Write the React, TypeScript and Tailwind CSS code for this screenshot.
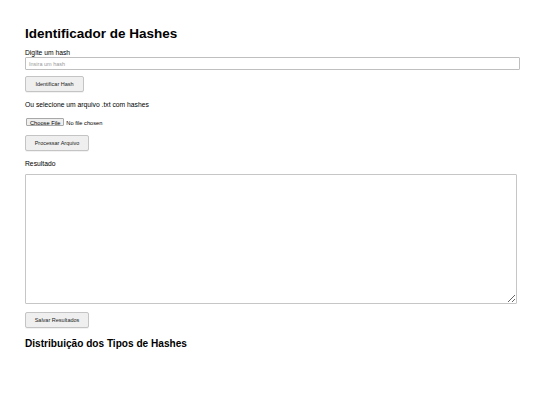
import React from 'react';

const btn =
  'h-[16px] border border-[#c4c4c4] bg-[#efefef] rounded-[2px] text-[5.5px] text-[#222] flex items-center justify-center shadow-[0_1px_0_rgba(0,0,0,0.05)]';

export default function App() {
  return (
    <div className="w-[540px] h-[405px] bg-white text-black pl-[25px] pt-[26px] font-['Liberation_Sans',Arial,sans-serif]">
      <h1 className="text-[13.5px] leading-[16px] font-bold">Identificador de Hashes</h1>

      <label className="block mt-[7px] text-[6.75px] leading-[8px]">Digite um hash</label>
      <input
        type="text"
        placeholder="Insira um hash"
        className="block w-[495px] h-[13px] border border-[#bfbfbf] rounded-[1px] px-[3px] text-[5.5px] placeholder:text-[#9a9a9a] outline-none"
      />

      <button className={`${btn} w-[59px] mt-[6px]`}>Identificar Hash</button>

      <p className="mt-[9px] text-[6.75px] leading-[8px]">Ou selecione um arquivo .txt com hashes</p>

      <input
        type="file"
        accept=".txt"
        className="block mt-[9px] ml-[1px] h-[8px] text-[5.7px] leading-[8px] file:h-[8px] file:mr-[2px] file:px-[3px] file:border file:border-solid file:border-[#a8a8a8] file:bg-[#efefef] file:rounded-[1px]"
      />

      <button className={`${btn} w-[64px] mt-[9px]`}>Processar Arquivo</button>

      <p className="mt-[9px] text-[6.75px] leading-[8px]">Resultado</p>

      <textarea className="block mt-[6px] w-[492px] h-[130px] border border-[#c6c6c6] rounded-[1px] outline-none" />

      <button className={`${btn} w-[64px] mt-[8px]`}>Salvar Resultados</button>

      <h2 className="mt-[10px] text-[10.1px] leading-[12px] font-bold">Distribuição dos Tipos de Hashes</h2>
    </div>
  );
}
